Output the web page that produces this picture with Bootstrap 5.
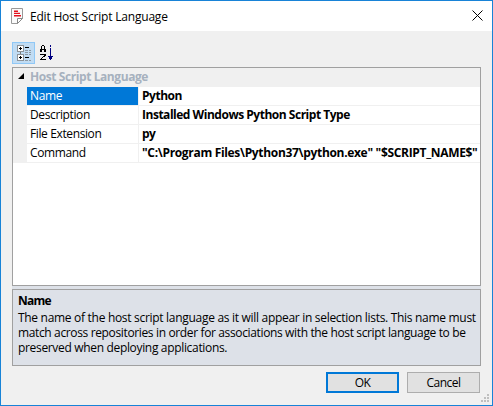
<!DOCTYPE html>
<html lang="en">
<head>
<meta charset="utf-8">
<title>Edit Host Script Language</title>
<link href="https://cdn.jsdelivr.net/npm/bootstrap@5.3.0/dist/css/bootstrap.min.css" rel="stylesheet">
<style>
body{font:12px/15px "Open Sans","Noto Sans",sans-serif;color:#000;letter-spacing:-.35px;overflow:hidden;white-space:nowrap}
svg{display:block;flex:none}
.dialog-frame{width:493px;height:406px;border:1px solid #1883d7;background:#f0f0f0}
.title-strip{height:30px;background:#fff;padding:0 9px 0 10px}
.title-text{margin-left:6px;letter-spacing:-.2px}
.tools{height:36px;padding:11px 0 0 11px}
.tool-on{width:23px;height:22px;background:#c1dcf3;border:1px solid #90c8f6}
.tool-off{width:23px;height:22px}
.props{margin:0 11px;height:219px;border:1px solid #a0a0a0;background:#fff}
.category{height:19px;background:#f0f0f0;color:#a6b1be;font-weight:700;letter-spacing:-.42px}
.category-name{padding-left:3px;margin-top:-2px}
.gutter{width:14px;flex:none;background:#f0f0f0}
.prop-row{height:19px}
.prop-row>div{line-height:18px;border-bottom:1px solid #f0f0f0}
.prop-row>.gutter{border-color:#f0f0f0}
.prop-key{width:112px;flex:none;padding-left:3px;border-right:1px solid #f0f0f0;letter-spacing:-.38px}
.prop-val{padding-left:3px;font-weight:700;letter-spacing:-.48px}
.prop-val.command{letter-spacing:-.32px}
.picked{background:#0078d7;color:#fff;letter-spacing:-.35px}
.help-wrap{margin:0 11px;padding-top:3px;background:#dde1e8}
.help{height:77px;border:1px solid #a0a0a0;padding:3px 5px}
.help-title{font-weight:700;letter-spacing:-.75px;height:15px;margin-bottom:2px}
.help-line{height:15px;line-height:15px;letter-spacing:-.33px}
.help-line.line-a{letter-spacing:-.3px}
.help-line.line-b{letter-spacing:-.36px}
.dlg-btn{width:73px;height:21px;padding:0;border:1px solid #adadad;border-radius:0;background:#e1e1e1;font-size:12px;line-height:19px;letter-spacing:-.5px;color:#000}
.dlg-btn.default{border:2px solid #0078d7;line-height:17px}
.actions{padding:6px 12px 0 0;gap:8px}
.grip{right:3px;bottom:3px}
</style>
</head>
<body>
<main class="dialog-frame position-relative d-flex flex-column">
<header class="title-strip d-flex align-items-center">
<svg width="13" height="16" viewBox="0 0 13 16"><path d="M.5.5h11v10l-5 5h-6z" fill="#fafafa" stroke="#999"/><path d="M6.500 15.500v-5h5z" fill="#fff" stroke="#888"/><path d="M3 2.600h4v1.300H3zM3 4.800h6v1.300H3zM3 7h7v1.500H3z" fill="#e5101c"/></svg>
<span class="title-text">Edit Host Script Language</span>
<svg class="ms-auto" width="11" height="12" viewBox="0 0 11 12"><path d="M.5.5l10 10M10.500.5l-10 10" stroke="#000" stroke-width="1"/></svg>
</header>
<div class="tools d-flex">
<div class="tool-on"><svg width="21" height="20" viewBox="0 0 21 20" shape-rendering="crispEdges"><path d="M7.500 9v2" stroke="#777"/><path d="M4.500 2.500h6v6h-6zM4.500 11.500h6v6h-6z" fill="#fff" stroke="#8d9398"/><path d="M6 5.500h3M7.500 4v3M6 14.500h3M7.500 13v3M12 4.500h4M12 14.500h4" stroke="#000"/><path d="M12 7.500h6M12 9.500h6M12 11.500h6M12 17.500h6" stroke="#8d9aa5" stroke-dasharray="3 1"/></svg></div>
<div class="tool-off"><svg width="23" height="22" viewBox="0 0 23 22" shape-rendering="crispEdges"><path d="M7 3h2v1H7zM6 4h1v2H6zM9 4h1v2H9zM5 7h2v3H5zM6 6h1v2H6zM9 6h1v2H9zM9 7h2v3H9zM6 7h4v1H6zM5 12h6v1H5zM9 13h2v1H9zM8 14h2v1H8zM7 15h1v1H7zM6 16h1v1H6zM5 17h6v1H5z" fill="#000"/><path d="M15 3h1v2h-1zM15 6h1v12h-1zM13 14h5v1h-5zM14 15h3v2h-3z" fill="#000080"/></svg></div>
</div>
<section class="props">
<div class="category d-flex align-items-center"><div class="gutter"><svg width="14" height="12" viewBox="0 0 14 12"><path d="M11 1v6H5z" fill="#000"/></svg></div><span class="category-name">Host Script Language</span></div>
<div class="prop-row d-flex"><div class="gutter"></div><div class="prop-key picked">Name</div><div class="prop-val flex-fill">Python</div></div>
<div class="prop-row d-flex"><div class="gutter"></div><div class="prop-key">Description</div><div class="prop-val flex-fill">Installed Windows Python Script Type</div></div>
<div class="prop-row d-flex"><div class="gutter"></div><div class="prop-key">File Extension</div><div class="prop-val flex-fill">py</div></div>
<div class="prop-row d-flex"><div class="gutter"></div><div class="prop-key">Command</div><div class="prop-val command flex-fill">"C:\Program Files\Python37\python.exe" "$SCRIPT_NAME$"</div></div>
</section>
<section class="help-wrap"><div class="help"><div class="help-title">Name</div><div class="help-line line-a">The name of the host script language as it will appear in selection lists. This name must</div><div class="help-line line-b">match across repositories in order for associations with the host script language to be</div><div class="help-line">preserved when deploying applications.</div></div></section>
<footer class="actions d-flex justify-content-end"><button class="btn dlg-btn default">OK</button><button class="btn dlg-btn">Cancel</button></footer>
<svg class="grip position-absolute" width="8" height="8" viewBox="0 0 8 8"><path d="M6 0h2v2H6zM3 3h2v2H3zM6 3h2v2H6zM0 6h2v2H0zM3 6h2v2H3zM6 6h2v2H6z" fill="#bfbfbf"/></svg>
</main>
<script src="https://cdn.jsdelivr.net/npm/bootstrap@5.3.0/dist/js/bootstrap.bundle.min.js"></script>
</body>
</html>
